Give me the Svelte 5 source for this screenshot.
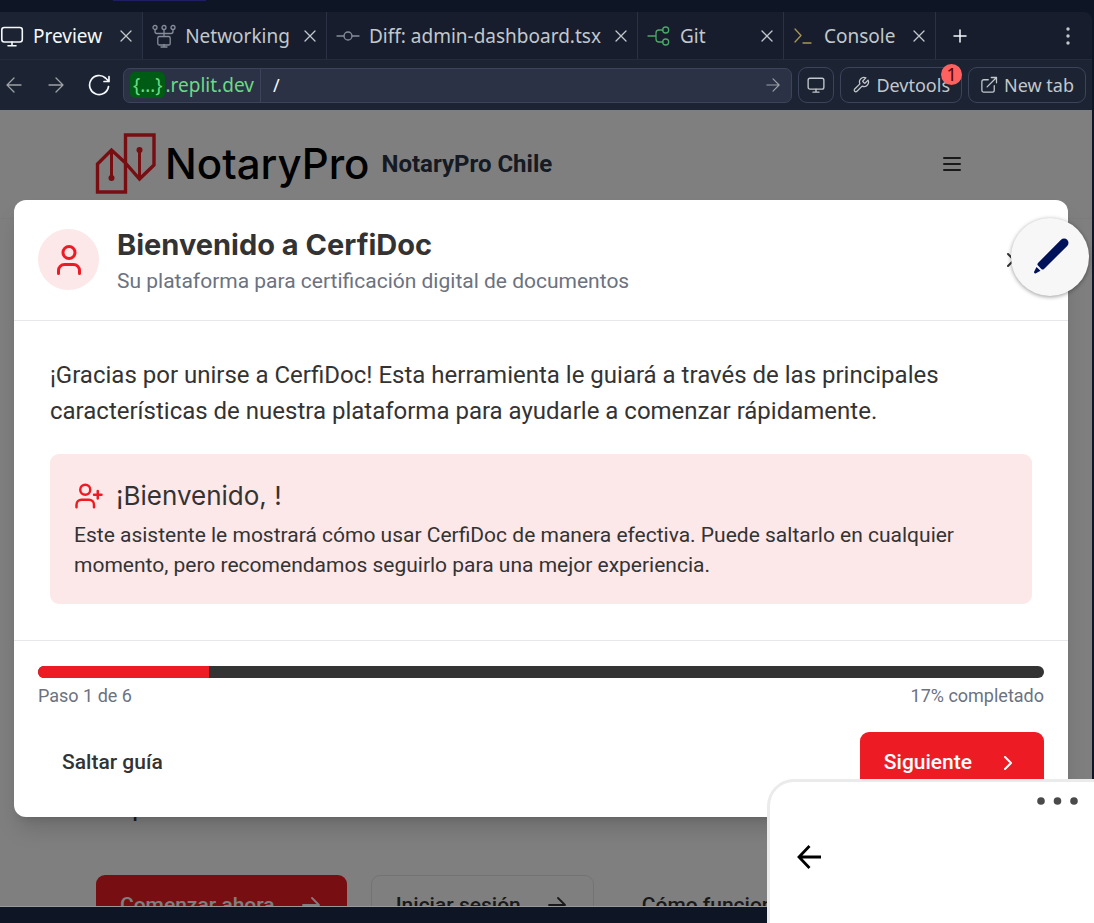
<script>
  const step = 1;
  const total = 6;
  const percent = Math.round((step / total) * 100);

  const tabs = [
    { name: 'Preview', icon: 'monitor' },
    { name: 'Networking', icon: 'network' },
    { name: 'Diff: admin-dashboard.tsx', icon: 'commit' },
    { name: 'Git', icon: 'git' },
    { name: 'Console', icon: 'prompt' }
  ];
</script>

{#snippet arrow(size, width)}
  <svg width={size} height={size} viewBox="0 0 24 24" fill="none" stroke="currentColor" stroke-width={width} stroke-linecap="round" stroke-linejoin="round"><path d="M4 12h16M13 5l7 7-7 7" /></svg>
{/snippet}

<div class="workspace">
  <div class="strip"><span></span></div>

  <nav class="tabs" aria-label="Tabs">
    {#each tabs as tab, i}
      <div class="tab {tab.icon}" class:active={i === 0}>
        <button class="tab-name">
          <svg width="24" height="24" viewBox="0 0 24 24" fill="none" stroke="currentColor" stroke-width="1.3" stroke-linecap="round" stroke-linejoin="round">
            {#if tab.icon === 'monitor'}
              <rect x="1.8" y="3.5" width="20.5" height="14.5" rx="2.5" stroke-width="1.6" /><path d="M12 18v3.5M8 21.7h8" stroke-width="1.6" />
            {:else if tab.icon === 'network'}
              <circle cx="3" cy="3.5" r="2" /><circle cx="12" cy="3.5" r="2" /><circle cx="21" cy="3.5" r="2" />
              <path d="M12 5.5v7M3 5.5v2q0 2 2 2h14q2 0 2-2v-2M12 20.5v2.5M9 23h6" /><rect x="5.8" y="12.5" width="12.4" height="8.5" rx="1.6" />
            {:else if tab.icon === 'commit'}
              <path d="M1 12h7M16 12h7" /><circle cx="12" cy="12" r="4" />
            {:else if tab.icon === 'git'}
              <path d="M1 12h8M16 6h-4q-3 0-3 3v6q0 3 3 3h4" /><circle cx="18.7" cy="6" r="3" /><circle cx="18.7" cy="18" r="3" />
            {:else}
              <path d="M4 5l6 6.5L4 18M12 19h8" />
            {/if}
          </svg>
          <span>{tab.name}</span>
        </button>
        <button class="tab-close" aria-label="Close {tab.name}">
          <svg width="12" height="12" viewBox="0 0 12 12" fill="none" stroke="currentColor" stroke-width="1.3" stroke-linecap="round"><path d="M1 1l10 10M11 1L1 11" /></svg>
        </button>
      </div>
    {/each}
    <button class="add" aria-label="New tab">
      <svg width="14" height="14" viewBox="0 0 14 14" stroke="currentColor" stroke-width="1.5" stroke-linecap="round"><path d="M7 1v12M1 7h12" /></svg>
    </button>
    <button class="more" aria-label="More">
      <svg width="4" height="18" viewBox="0 0 4 18" fill="currentColor"><circle cx="2" cy="2" r="1.7" /><circle cx="2" cy="9" r="1.7" /><circle cx="2" cy="16" r="1.7" /></svg>
    </button>
  </nav>

  <div class="toolbar">
    <div class="history">
      <button aria-label="Back">
        <svg width="16" height="16" viewBox="0 0 16 16" fill="none" stroke="currentColor" stroke-width="1.3" stroke-linecap="round" stroke-linejoin="round"><path d="M15 8H1M8 1L1 8l7 7" /></svg>
      </button>
      <button aria-label="Forward">
        <svg width="16" height="16" viewBox="0 0 16 16" fill="none" stroke="currentColor" stroke-width="1.3" stroke-linecap="round" stroke-linejoin="round"><path d="M1 8h14M8 1l7 7-7 7" /></svg>
      </button>
      <button class="reload" aria-label="Reload">
        <svg width="22" height="22" viewBox="0 0 22 22" fill="none" stroke="currentColor" stroke-width="1.7" stroke-linecap="round" stroke-linejoin="round"><path d="M20.500 12.500A9.500 9.500 0 1 1 17.500 4L21 7.500M21 2.500v5h-5" /></svg>
      </button>
    </div>
    <div class="address">
      <span class="host"><b>{'{…}'}</b>.replit.dev</span>
      <input aria-label="Path" value="/" />
      <button aria-label="Go">
        <svg width="14" height="14" viewBox="0 0 16 16" fill="none" stroke="currentColor" stroke-width="1.3" stroke-linecap="round" stroke-linejoin="round"><path d="M1 8h14M8 1l7 7-7 7" /></svg>
      </button>
    </div>
    <button class="tool" aria-label="Screen size">
      <svg width="18" height="18" viewBox="0 0 24 24" fill="none" stroke="currentColor" stroke-width="1.8" stroke-linecap="round" stroke-linejoin="round"><rect x="1.5" y="3" width="21" height="14.5" rx="2.5" /><path d="M12 17.500v4M8 21.500h8" /></svg>
    </button>
    <button class="tool">
      <svg width="18" height="18" viewBox="0 0 24 24" fill="none" stroke="currentColor" stroke-width="1.7" stroke-linecap="round" stroke-linejoin="round"><path d="M14.700 6.300a1 1 0 0 0 0 1.400l1.600 1.600a1 1 0 0 0 1.400 0l3.770-3.770a6 6 0 0 1-7.940 7.940l-6.910 6.910a2.120 2.120 0 0 1-3-3l6.910-6.910a6 6 0 0 1 7.940-7.940l-3.760 3.760z" /></svg>
      <span>Devtools</span>
      <em>1</em>
    </button>
    <button class="tool">
      <svg width="18" height="18" viewBox="0 0 24 24" fill="none" stroke="currentColor" stroke-width="1.7" stroke-linecap="round" stroke-linejoin="round"><path d="M19 13v6a2.500 2.500 0 0 1-2.500 2.500H5A2.500 2.500 0 0 1 2.500 19V7.500A2.500 2.500 0 0 1 5 5h6M15 2h7v7M9.500 14.500L22 2" /></svg>
      <span>New tab</span>
    </button>
  </div>

  <div class="preview">
    <div class="site">
      <header>
        <a class="brand" href="#inicio">
          <svg width="62" height="62" viewBox="0 0 62 62" fill="none" stroke="#ed1c24" stroke-width="3.400">
            <path d="M30.500 30L16.500 17 2.500 31v28h28V2h28.500v30L44.500 46 30.500 30" />
            <path d="M16.500 17v28M44.500 45V17" stroke-width="3" />
            <circle cx="16.500" cy="45" r="3" fill="#ed1c24" stroke="none" /><circle cx="44.500" cy="17" r="3" fill="#ed1c24" stroke="none" />
          </svg>
          <span class="wordmark">NotaryPro</span>
          <strong>NotaryPro Chile</strong>
        </a>
        <button class="menu" aria-label="Menú">
          <svg width="18" height="16" viewBox="0 0 18 16" stroke="currentColor" stroke-width="2" stroke-linecap="round"><path d="M1 2h16M1 8h16M1 14h16" /></svg>
        </button>
      </header>
      <section>
        <p>p</p>
        <div class="actions">
          <button class="primary">Comenzar ahora {@render arrow(24, 1.8)}</button>
          <button class="outline">Iniciar sesión {@render arrow(24, 1.8)}</button>
          <button>Cómo funciona</button>
        </div>
      </section>
    </div>

    <div class="overlay">
      <div class="dialog" role="dialog" aria-modal="true" aria-labelledby="dialog-title">
        <div class="dialog-head">
          <span class="avatar">
            <svg width="36" height="36" viewBox="0 0 24 24" fill="none" stroke="currentColor" stroke-width="2" stroke-linecap="round" stroke-linejoin="round"><circle cx="12" cy="7" r="4" /><path d="M19 21v-2a4 4 0 0 0-4-4H9a4 4 0 0 0-4 4v2" /></svg>
          </span>
          <div class="titles">
            <h2 id="dialog-title">Bienvenido a CerfiDoc</h2>
            <p>Su plataforma para certificación digital de documentos</p>
          </div>
          <button class="dismiss" aria-label="Cerrar">
            <svg width="24" height="24" viewBox="0 0 24 24" fill="none" stroke="currentColor" stroke-width="2" stroke-linecap="round"><path d="M18 6L6 18M6 6l12 12" /></svg>
          </button>
        </div>

        <div class="dialog-body">
          <p>¡Gracias por unirse a CerfiDoc! Esta herramienta le guiará a través de las principales características de nuestra plataforma para ayudarle a comenzar rápidamente.</p>
          <div class="note">
            <h3>
              <svg width="30" height="30" viewBox="0 0 24 24" fill="none" stroke="currentColor" stroke-width="2" stroke-linecap="round" stroke-linejoin="round"><path d="M16 21v-2a4 4 0 0 0-4-4H6a4 4 0 0 0-4 4v2" /><circle cx="9" cy="7" r="4" /><path d="M19 8v6M22 11h-6" /></svg>
              <span>¡Bienvenido, !</span>
            </h3>
            <p>Este asistente le mostrará cómo usar CerfiDoc de manera efectiva. Puede saltarlo en cualquier momento, pero recomendamos seguirlo para una mejor experiencia.</p>
          </div>
        </div>

        <div class="dialog-foot">
          <div class="track" role="progressbar" aria-label="Progreso" aria-valuenow={percent}><div style="width: {percent}%"></div></div>
          <div class="status"><span>Paso {step} de {total}</span><span>{percent}% completado</span></div>
          <div class="choices">
            <button>Saltar guía</button>
            <button class="next">Siguiente
              <svg width="24" height="24" viewBox="0 0 24 24" fill="none" stroke="currentColor" stroke-width="2" stroke-linecap="round" stroke-linejoin="round"><path d="M9 19l6-6-6-6" /></svg>
            </button>
          </div>
        </div>
      </div>
    </div>
  </div>

  <button class="pencil" aria-label="Editar">
    <svg width="38" height="38" viewBox="0 0 38 38" fill="#00125a"><path d="M7 25L30 1.700a4.300 4.300 0 0 1 6.200 6.200L13 31q-1.400 1.100-2.700-.1L7 27.600q-1.200-1.300 0-2.600zM5.500 29l4 3.800L5 35.200q-2 .7-2-1.200z" /></svg>
  </button>

  <aside class="panel">
    <button class="dots" aria-label="Opciones">
      <svg width="42" height="8" viewBox="0 0 42 8" fill="#4a4a4a"><circle cx="4" cy="4" r="3.800" /><circle cx="20.500" cy="4" r="3.800" /><circle cx="37" cy="4" r="3.800" /></svg>
    </button>
    <button class="return" aria-label="Volver">
      <svg width="24" height="24" viewBox="0 0 24 24" fill="none" stroke="#000" stroke-width="2.800"><path d="M24 12H2M12.500 1L2 12l10.500 11" /></svg>
    </button>
  </aside>
</div>

<style>
  :global(body) { margin: 0; background: #0e1525; }
  button {
    display: flex; align-items: center; padding: 0; border: 0;
    background: none; color: inherit; font: inherit; white-space: nowrap;
  }
  svg { display: block; flex: none; }
  h2, h3, p { margin: 0; }

  .workspace {
    position: relative; display: flex; flex-direction: column; box-sizing: border-box;
    height: 100vh; padding: 0 2px 16px 0; overflow: hidden;
    background: #0e1525; color: #c2c8cc; font: 19px/24px "Noto Sans", sans-serif;
  }
  .strip { flex: none; height: 12px; }
  .strip span { display: block; width: 93px; height: 1px; margin-left: 113px; background: #211d62; }

  .tabs {
    display: flex; flex: none; box-sizing: border-box; height: 48px;
    border-bottom: 1px solid #242b3b; border-radius: 0 8px 0 0; background: #171d2d;
  }
  .tab {
    display: flex; align-items: center; justify-content: space-between; gap: 14px;
    padding: 0 10px 0 9px; border-right: 1px solid #2b3245;
  }
  .tab.active { gap: 18px; padding-left: 0; background: #1c2333; color: #f5f9fc; }
  .tab-name { gap: 9px; }
  .network svg, .commit svg { color: #858d99; }
  .git { min-width: 126px; }
  .git .tab-name svg { color: #4ca866; }
  .prompt { gap: 18px; padding-left: 7px; }
  .prompt .tab-name svg { color: #a89556; }
  .tab .tab-close svg { color: #c2c8cc; }
  .add { margin-left: 17px; color: #f5f9fc; }
  .more { margin: 0 22px 0 auto; }

  .toolbar {
    display: flex; flex: none; align-items: center; gap: 6px; box-sizing: border-box;
    height: 50px; padding: 0 6px; background: #1c2333; font-size: 18px;
  }
  .history { display: flex; align-items: center; gap: 26px; margin-right: 7px; color: #9da2a6; }
  .history .reload { margin-left: -2px; color: #f5f9fc; }
  .address {
    display: flex; flex: 1; align-items: center; box-sizing: border-box; min-width: 0; height: 35px;
    padding-right: 11px; border: 1px solid #3c445c; border-radius: 7px; background: #2b3245;
  }
  .host {
    display: flex; align-items: center; align-self: stretch; padding: 0 6px;
    border-right: 1px solid #3c445c; color: #6cd984; font-size: 19px;
  }
  .host b { padding: 1px 3px; border-radius: 5px; background: #005c14; font-weight: 400; }
  .address input {
    flex: 1; min-width: 0; padding: 0 12px; border: 0; outline: 0;
    background: none; color: #f5f9fc; font: inherit;
  }
  .address button { color: #9da2a6; }
  .tool {
    position: relative; gap: 6px; box-sizing: border-box; height: 36px; padding: 0 11px;
    border: 1px solid #3c445c; border-radius: 9px;
  }
  .tool[aria-label] { padding: 0 8px; }
  .tool em {
    position: absolute; top: -4px; right: -1px; width: 21px; height: 21px; border-radius: 50%;
    background: #ff6160; color: #5c0000; font-style: normal; line-height: 21px; text-align: center;
  }

  .preview {
    position: relative; flex: 1; min-height: 0; overflow: hidden;
    border-bottom: 1px solid #999; background: #fff; font-family: Roboto, sans-serif;
  }
  .site { display: flex; flex-direction: column; height: 100%; color: #333; }
  header {
    display: flex; flex: none; align-items: center; justify-content: space-between; box-sizing: border-box;
    height: 109px; padding: 0 131px 0 95px; border-bottom: 1px solid #f8f8f8;
  }
  .brand { display: flex; align-items: center; color: #2a3446; text-decoration: none; }
  .wordmark { margin: 0 12px 0 8px; color: #000; font: 500 42px/48px Inter, sans-serif; }
  .brand strong { font-size: 24px; font-weight: 700; }
  section {
    display: flex; flex: 1; flex-direction: column; justify-content: flex-end;
    padding: 0 96px; color: #333;
  }
  section p { padding-left: 36px; font-size: 27px; line-height: 36px; }
  .actions {
    display: flex; gap: 24px; margin: 51px 0 -29px;
    font-size: 21px; font-weight: 500; line-height: 30px;
  }
  .actions button { gap: 24px; box-sizing: border-box; height: 60px; padding: 0 24px; border-radius: 9px; }
  .actions .primary { background: #ed1c24; color: #fff; }
  .actions .outline { border: 1px solid #e5e7eb; }

  .overlay {
    position: absolute; inset: 0; display: flex; align-items: center;
    padding: 0 24px 0 14px; background: rgba(0, 0, 0, 0.5);
  }
  .dialog {
    width: 100%; border-radius: 12px; background: #fff; color: #333;
    box-shadow: 0 15px 22px -4px rgba(0, 0, 0, 0.15), 0 6px 9px -6px rgba(0, 0, 0, 0.15);
    font-size: 21px; line-height: 30px;
  }
  .dialog-head { display: flex; align-items: center; gap: 18px; padding: 24px; border-bottom: 1px solid #e5e7eb; }
  .avatar {
    display: grid; place-items: center; width: 61px; height: 61px;
    border-radius: 50%; background: #fce8e9; color: #ed1c24;
  }
  .titles { flex: 1; }
  h2 { font: 700 29px/42px Inter, sans-serif; }
  .titles p { color: #6b7280; }
  .dismiss { justify-content: center; width: 60px; height: 60px; }
  .dialog-body { padding: 36px; }
  .dialog-body > p { margin-bottom: 25px; font-size: 24px; line-height: 36px; }
  .note { padding: 24px; border-radius: 9px; background: #fce8e9; }
  h3 { display: flex; align-items: center; gap: 12px; margin-bottom: 6px; font: 400 26px/36px Inter, sans-serif; }
  h3 svg { color: #ed1c24; }
  .dialog-foot { padding: 25px 24px; border-top: 1px solid #e5e7eb; }
  .track { height: 12px; overflow: hidden; border-radius: 6px; background: #333; }
  .track div { height: 100%; background: #ed1c24; }
  .status {
    display: flex; justify-content: space-between; margin: 6px 0 24px;
    color: #6b7280; font-size: 18px; line-height: 24px;
  }
  .choices { display: flex; justify-content: space-between; font-weight: 500; }
  .choices button { gap: 24px; height: 60px; padding: 0 24px; border-radius: 9px; }
  .choices .next { background: #ed1c24; color: #fff; }

  .pencil {
    position: absolute; top: 218px; right: 5px; justify-content: center; width: 78px; height: 78px;
    border-radius: 50%; background: #f7f7f7; box-shadow: 0 1px 4px rgba(0, 0, 0, 0.4);
  }
  .panel {
    position: absolute; right: 0; bottom: 0; display: flex; flex-direction: column; box-sizing: border-box;
    width: 327px; height: 144px; padding: 15px 15px 0 27px;
    border: solid #ebebeb; border-width: 3px 0 0 3px; border-radius: 27px 0 0 0; background: #fff;
  }
  .dots { align-self: flex-end; }
  .return { margin-top: 40px; }
</style>
